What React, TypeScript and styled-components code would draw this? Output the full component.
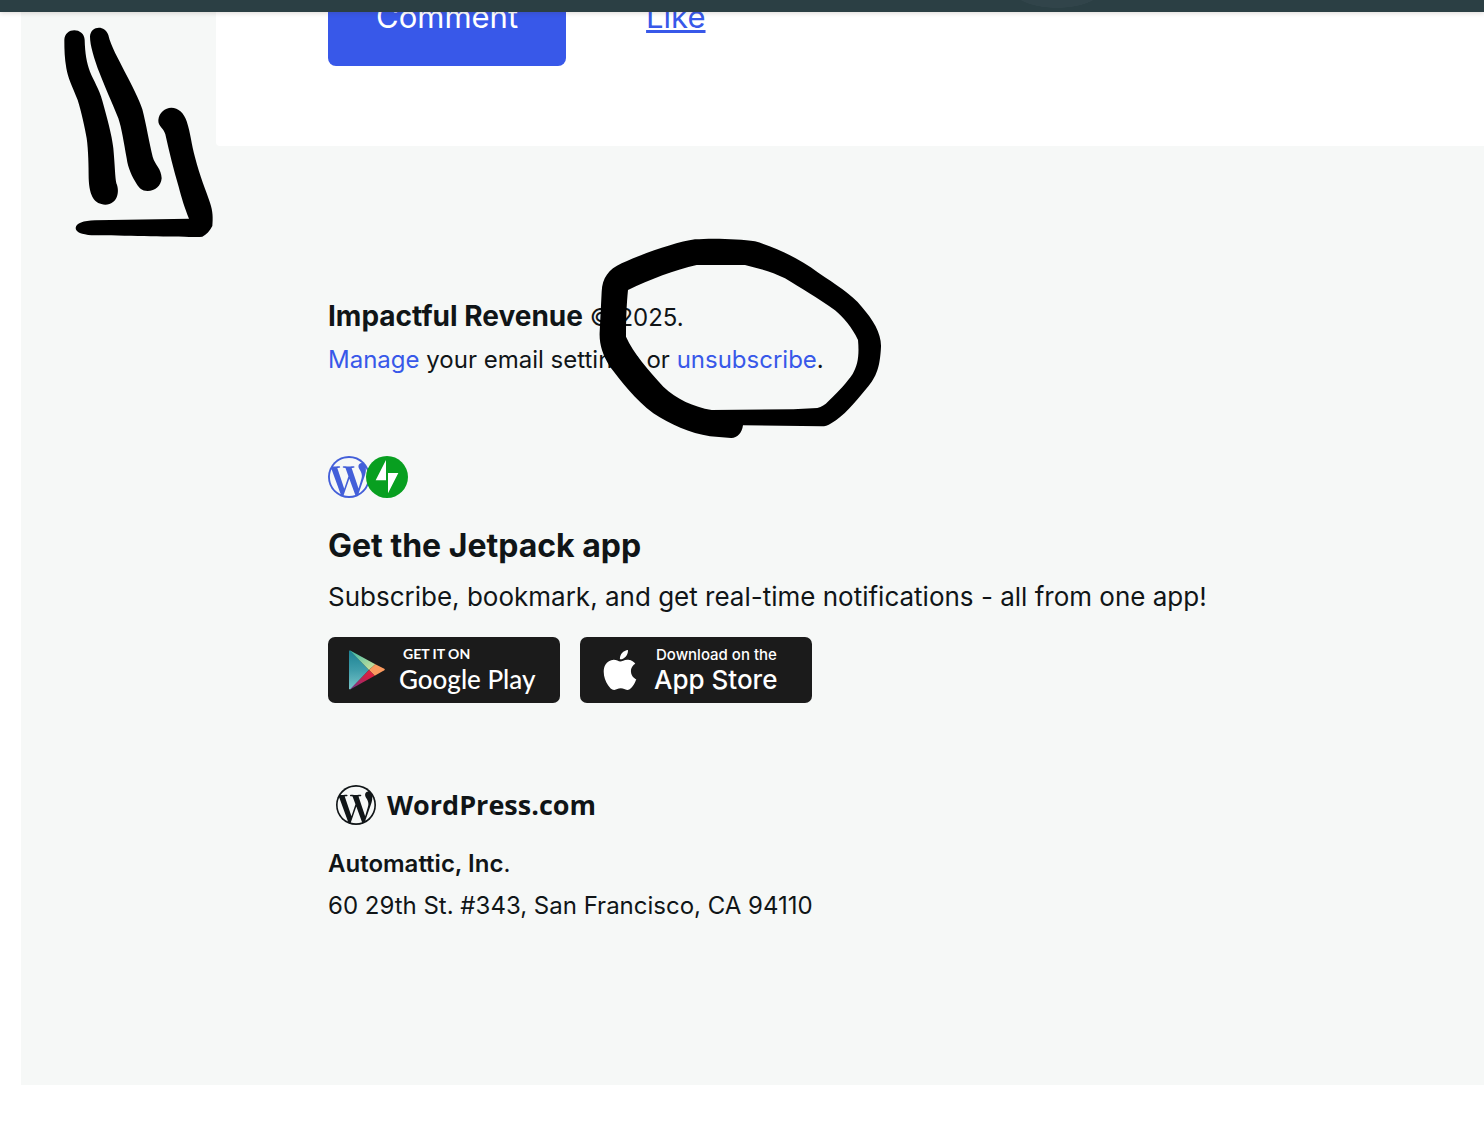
import React from "react";
import styled, { createGlobalStyle } from "styled-components";
import { SiApple } from "react-icons/si";

const color = {
  bar: "#2b3f44",
  barTint: "#31444a",
  panel: "#f6f8f7",
  ink: "#101517",
  link: "#3858e9",
  badge: "#1b1b1b",
  jetpack: "#089f20",
};

const GlobalStyle = createGlobalStyle`
  *, *::before, *::after { box-sizing: border-box; }
  body {
    margin: 0;
    background: #fff;
    color: ${color.ink};
    font-family: Inter, "Liberation Sans", sans-serif;
    overflow-x: hidden;
  }
  p, h2 { margin: 0; }
`;

const Page = styled.div`
  position: relative;
  overflow: hidden;
  padding-bottom: 39px;
`;

const TopBar = styled.header`
  position: absolute;
  inset: 0 0 auto;
  z-index: 2;
  height: 12px;
  background: radial-gradient(ellipse 46px 20px at 1057px -12px, ${color.barTint} 98%, transparent) ${color.bar};
  box-shadow: 0 1px 5px rgba(60, 40, 30, 0.18);
`;

const Panel = styled.main`
  display: flow-root;
  margin-left: 21px;
  background: ${color.panel};
`;

const Card = styled.section`
  display: flex;
  align-items: center;
  gap: 80px;
  margin: -28px 0 0 195px;
  padding: 0 112px 80px;
  background: #fff;
  border-bottom-left-radius: 4px;
`;

const CommentButton = styled.button`
  height: 94px;
  padding: 0 48px 4px;
  border: 0;
  border-radius: 8px;
  background: ${color.link};
  color: #fff;
  font: 400 31px/34px Inter, "Liberation Sans", sans-serif;
`;

const Link = styled.a<{ $underlined?: boolean }>`
  color: ${color.link};
  text-decoration: ${(p) => (p.$underlined ? "underline" : "none")};
`;

const CardLink = styled(Link)`
  padding-bottom: 4px;
  font-size: 31px;
  line-height: 34px;
  text-decoration-thickness: 3px;
  text-underline-offset: 2px;
`;

const Footer = styled.footer`
  display: flex;
  flex-direction: column;
  align-items: flex-start;
  padding: 151px 40px 158px 307px;
`;

const Line = styled.p<{ $size?: number }>`
  font-size: ${(p) => p.$size ?? 24}px;
  line-height: 42px;
`;

const SiteName = styled.strong`
  font-size: 28px;
  font-weight: 700;
  line-height: 1;
`;

const Company = styled.strong`
  font-weight: 600;
`;

const AppLogos = styled.div`
  display: flex;
  margin: 75px 0 28px;
`;

const RoundLogo = styled.span<{ $color: string; $overlap?: boolean }>`
  display: flex;
  width: 42px;
  height: 42px;
  margin-left: ${(p) => (p.$overlap ? "-4px" : "0")};
  border-radius: 50%;
  color: ${(p) => p.$color};
`;

const Heading = styled.h2`
  margin-bottom: 10px;
  font-size: 32px;
  font-weight: 700;
  line-height: 40px;
`;

const Badges = styled.div`
  display: flex;
  gap: 20px;
  margin: 19px 0 82px;
`;

const Badge = styled.a`
  display: flex;
  align-items: center;
  width: 232px;
  height: 66px;
  padding-left: 20px;
  border-radius: 7px;
  background: ${color.badge};
  color: #fff;
  text-decoration: none;
`;

const BadgeText = styled.span<{ $family: string; $gap: number; $lift?: number }>`
  display: flex;
  flex-direction: column;
  margin-left: ${(p) => p.$gap}px;
  padding-bottom: ${(p) => p.$lift ?? 0}px;
  font-family: ${(p) => p.$family}, sans-serif;
`;

const BadgeSmall = styled.span<{ $size: number; $indent: number; $weight: number }>`
  padding-left: ${(p) => p.$indent}px;
  font-size: ${(p) => p.$size}px;
  font-weight: ${(p) => p.$weight};
  line-height: 20px;
`;

const BadgeLarge = styled.span`
  font-size: 26px;
  font-weight: 500;
  line-height: 30px;
`;

const Brand = styled.div`
  display: flex;
  align-items: center;
  gap: 11px;
  height: 40px;
  margin: 0 0 18px 8px;
  font: 700 27px/40px "Open Sans", "Noto Sans", sans-serif;
`;

const Ink = styled.svg<{ $x: number; $y: number }>`
  position: absolute;
  z-index: 1;
  left: ${(p) => p.$x}px;
  top: ${(p) => p.$y}px;
  pointer-events: none;
`;

function WordPressMark({ size, inset }: { size: number; inset: number }) {
  return (
    <svg width={size} height={size} viewBox="0 0 122.52 122.52" aria-hidden="true">
      <circle cx="61.26" cy="61.26" r="61.26" fill="currentColor" />
      <g fill={color.panel} transform={`translate(61.26 61.26) scale(${inset}) translate(-61.26 -61.26)`}>
        <path d="M8.708 61.26c0 20.802 12.089 38.779 29.619 47.298L13.258 39.872c-2.916 6.536-4.55 13.769-4.55 21.388z" />
        <path d="M96.74 58.608c0-6.495-2.333-10.993-4.334-14.494-2.664-4.329-5.161-7.995-5.161-12.324 0-4.831 3.664-9.328 8.825-9.328.233 0 .454.029.681.042-9.35-8.566-21.807-13.796-35.489-13.796-18.36 0-34.513 9.42-43.91 23.688 1.233.037 2.395.063 3.382.063 5.497 0 14.006-.667 14.006-.667 2.833-.167 3.167 3.994.337 4.329 0 0-2.847.335-6.015.501L48.2 93.547l11.501-34.493-8.188-22.434c-2.83-.166-5.511-.501-5.511-.501-2.832-.166-2.5-4.496.332-4.329 0 0 8.679.667 13.843.667 5.496 0 14.006-.667 14.006-.667 2.835-.167 3.168 3.994.337 4.329 0 0-2.853.335-6.015.501l18.992 56.494 5.242-17.517c2.272-7.269 4.001-12.49 4.001-16.989z" />
        <path d="M62.184 65.857l-15.768 45.819c4.708 1.384 9.687 2.141 14.846 2.141 6.12 0 11.989-1.058 17.452-2.979-.141-.225-.269-.464-.374-.724z" />
        <path d="M107.376 36.046c.226 1.674.354 3.471.354 5.404 0 5.333-.996 11.328-3.996 18.824l-16.053 46.413c15.624-9.111 26.133-26.038 26.133-45.426.001-9.137-2.333-17.729-6.438-25.215z" />
      </g>
    </svg>
  );
}

function JetpackMark() {
  return (
    <svg width="42" height="42" viewBox="0 0 126 126" aria-hidden="true">
      <circle cx="63" cy="63" r="63" fill="currentColor" />
      <path d="M60 12V73H29ZM66 51H97L66 112Z" fill="#fff" />
    </svg>
  );
}

function PlayMark() {
  return (
    <svg width="37" height="40" viewBox="0 0 111 120" aria-hidden="true">
      <defs>
        <linearGradient id="teal" x1="0" y1="0" x2="0" y2="1">
          <stop offset="0" stopColor="#1c8193" />
          <stop offset="0.5" stopColor="#3f9daa" />
          <stop offset="1" stopColor="#79c5c9" />
        </linearGradient>
        <linearGradient id="green" x1="0" y1="0" x2="1" y2="1">
          <stop offset="0" stopColor="#35b8a8" />
          <stop offset="1" stopColor="#d8e59a" />
        </linearGradient>
        <linearGradient id="red" x1="1" y1="0" x2="0" y2="1">
          <stop offset="0" stopColor="#e8203a" />
          <stop offset="0.4" stopColor="#c9204a" />
          <stop offset="1" stopColor="#6d3a92" />
        </linearGradient>
      </defs>
      <path d="M3 2Q5 1 8 3L63 60L8 117Q5 119 3 117Z" fill="url(#teal)" />
      <path d="M5 1L82 43L63 60Z" fill="url(#green)" />
      <path d="M82 43L109 56Q112 59 109 61L80 77L63 60Z" fill="#fb9a5e" />
      <path d="M63 60L80 77L5 119Z" fill="url(#red)" />
    </svg>
  );
}

function Arrow() {
  return (
    <Ink $x={0} $y={0} width="260" height="260" viewBox="0 0 780 780" aria-hidden="true">
      <path d="M193 120C194 80 253 82 254 120C255 160 260 188 270 215C280 240 298 268 307 302C320 350 336 405 340 445C345 500 345 530 349 550C360 575 353 613 316 614C284 613 268 590 266 535C266 500 265 450 260 415C254 380 244 335 233 300C215 255 204 235 199 205C194 175 193 150 193 120Z" />
      <path d="M270 110C271 79 313 72 325 105C333 140 355 176 375 217C395 255 418 300 427 328C438 370 448 430 458 470C465 495 484 505 485 535C483 558 465 573 443 573C425 573 418 564 410 552C396 530 384 505 380 475C371 425 365 385 355 355C335 305 312 255 299 220C282 175 270 135 270 110Z" />
      <path d="M475 360C477 338 495 323 514 323C535 323 553 340 560 364C572 400 574 432 585 472C600 530 617 570 630 608C639 634 639 655 637 678C629 694 620 703 607 710C560 713 400 707 275 706C245 703 227 697 227 684C228 670 250 662 285 661L567 656C553 620 545 595 536 560C520 507 508 457 496 403C490 382 474 380 475 360Z" />
    </Ink>
  );
}

function Circle() {
  return (
    <Ink $x={580} $y={220} width="320" height="230" viewBox="0 0 960 690" aria-hidden="true">
      <path
        fillRule="evenodd"
        d="M65 215C67 175 85 148 125 130C195 98 290 66 345 58C390 54 480 56 525 64C595 84 660 118 715 158C765 192 815 222 845 260C880 300 904 340 903 380C900 440 890 470 860 505C825 548 790 590 755 609C742 617 735 619 725 619L489 616C486 640 470 655 453 654L390 649C330 640 270 613 220 580C165 538 125 485 90 440C67 405 57 370 59 335ZM144 210C140 250 138 300 138 350C160 400 205 450 250 500C290 538 340 560 395 570L640 568L712 564C725 561 735 555 745 544C780 510 800 488 818 462C834 435 838 405 834 360C815 320 790 292 765 271C715 235 660 203 615 175C575 155 535 145 495 135L350 135C285 150 210 178 144 210Z"
      />
    </Ink>
  );
}

export default function App() {
  return (
    <Page>
      <GlobalStyle />
      <TopBar />
      <Panel>
        <Card>
          <CommentButton type="button">Comment</CommentButton>
          <CardLink href="#like" $underlined>Like</CardLink>
        </Card>
        <Footer>
          <Line><SiteName>Impactful Revenue</SiteName> © 2025.</Line>
          <Line>
            <Link href="#manage">Manage</Link> your email settings or{" "}
            <Link href="#unsubscribe">unsubscribe</Link>.
          </Line>
          <AppLogos>
            <RoundLogo $color="#435fd9"><WordPressMark size={42} inset={1.06} /></RoundLogo>
            <RoundLogo $color={color.jetpack} $overlap><JetpackMark /></RoundLogo>
          </AppLogos>
          <Heading>Get the Jetpack app</Heading>
          <Line $size={26}>Subscribe, bookmark, and get real-time notifications - all from one app!</Line>
          <Badges>
            <Badge href="#google-play">
              <PlayMark />
              <BadgeText $family="Lato" $gap={14} $lift={2}>
                <BadgeSmall $size={14} $indent={4} $weight={700}>GET IT ON</BadgeSmall>
                <BadgeLarge>Google Play</BadgeLarge>
              </BadgeText>
            </Badge>
            <Badge href="#app-store">
              <SiApple size={40} />
              <BadgeText $family="Inter" $gap={14}>
                <BadgeSmall $size={15} $indent={2} $weight={500}>Download on the</BadgeSmall>
                <BadgeLarge>App Store</BadgeLarge>
              </BadgeText>
            </Badge>
          </Badges>
          <Brand>
            <WordPressMark size={40} inset={1.07} />
            WordPress.com
          </Brand>
          <Line><Company>Automattic, Inc</Company>.</Line>
          <Line>60 29th St. #343, San Francisco, CA 94110</Line>
        </Footer>
      </Panel>
      <Arrow />
      <Circle />
    </Page>
  );
}
